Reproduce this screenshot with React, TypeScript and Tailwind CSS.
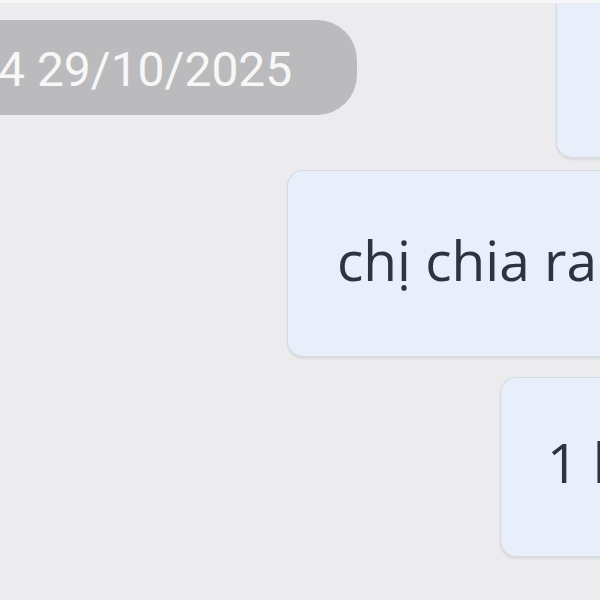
import React from 'react'

const Bubble = ({ className, children }: { className: string; children?: React.ReactNode }) => (
  <div
    className={
      'bg-[#e8eefa] border border-r-0 border-[#d6dae2] shadow-[0_2px_2px_rgba(0,0,0,0.08)] flex items-center whitespace-nowrap overflow-hidden ' +
      className
    }
  >
    {children}
  </div>
)

export default function App() {
  return (
    <div
      className="w-[600px] h-[600px] overflow-hidden bg-[#ececef] border-t-[3px] border-[#f7f7f8] flex flex-col"
      style={{ fontFamily: '"Open Sans", "Noto Sans", sans-serif' }}
    >
      <div className="flex justify-between items-start">
        <div className="mt-[17px] h-[95px] w-[357px] bg-[#bbbbbe] rounded-r-[40px] flex items-center overflow-hidden">
          <span
            className="text-[#f7f7f8] text-[48px] leading-none -ml-[2px] pt-[4px] whitespace-nowrap"
            style={{ fontFamily: 'Roboto, "Liberation Sans", sans-serif' }}
          >
            4 29/10/2025
          </span>
        </div>
        <Bubble className="-mt-[10px] w-[44px] h-[165px] rounded-bl-[16px] border-t-0" />
      </div>

      <Bubble className="mt-[12px] ml-[287px] w-[330px] h-[187px] rounded-l-[16px] pl-[49px]">
        <span className="text-[#2d3340] text-[55px] leading-none pb-[8px]">chị chia ra</span>
      </Bubble>

      <Bubble className="mt-[20px] ml-[500px] w-[120px] h-[180px] rounded-l-[16px] pl-[46px]">
        <span className="text-[#2d3340] text-[55px] leading-none pb-[12px]">1 lần</span>
      </Bubble>
    </div>
  )
}
